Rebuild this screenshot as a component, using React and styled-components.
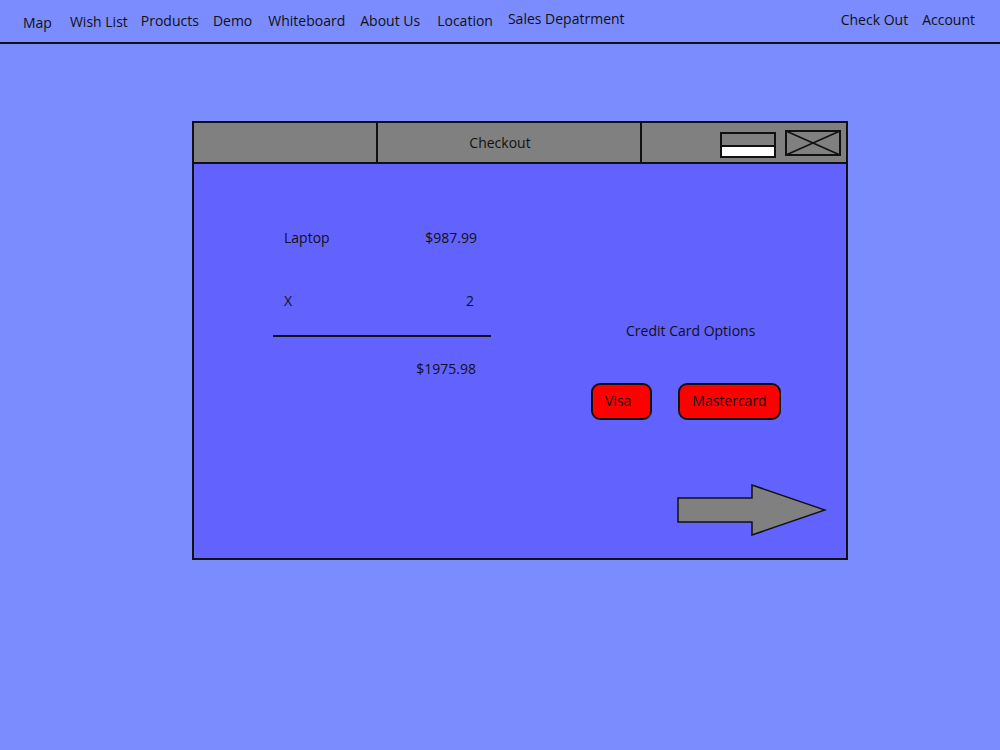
import React from "react";
import styled, { createGlobalStyle } from "styled-components";

const Global = createGlobalStyle`
  html, body { margin: 0; padding: 0; }
  body {
    background: #7b8cff;
    font-family: "Open Sans", "Liberation Sans", sans-serif;
    font-size: 14px;
    color: #111;
    width: 1000px;
    height: 750px;
    overflow: hidden;
  }
`;

const Page = styled.div`
  width: 1000px;
  height: 750px;
  background: #7b8cff;
`;

const Nav = styled.nav`
  height: 42px;
  border-bottom: 2px solid #111;
  display: flex;
  align-items: flex-start;
  padding: 0 25px 0 23px;
  box-sizing: content-box;
`;

const NavGroup = styled.div`
  display: flex;
  margin-left: ${(p) => (p.$right ? "auto" : "0")};
`;

const NavItem = styled.a`
  line-height: 20px;
  margin-top: ${(p) => p.$top}px;
  margin-left: ${(p) => p.$ml || 0}px;
  color: #111;
  text-decoration: none;
  white-space: nowrap;
`;

const Window = styled.section`
  margin: 77px 0 0 192px;
  width: 656px;
  height: 439px;
  box-sizing: border-box;
  border: 2px solid #111;
  background: #6262ff;
  display: flex;
  flex-direction: column;
`;

const TitleBar = styled.div`
  height: 39px;
  flex: none;
  display: grid;
  grid-template-columns: 184px 264px 1fr;
  background: #808080;
  border-bottom: 2px solid #111;
`;

const TitleCell = styled.div`
  display: flex;
  align-items: center;
  justify-content: ${(p) => p.$justify || "center"};
  border-right: ${(p) => (p.$divider ? "2px solid #111" : "none")};
  padding-right: ${(p) => p.$pr || 0}px;
  gap: 9px;
`;

const MinBox = styled.div`
  width: 56px;
  height: 26px;
  box-sizing: border-box;
  border: 2px solid #111;
  display: flex;
  flex-direction: column;
  justify-content: flex-end;
  margin-top: 4px;
  background: #808080;
`;

const MinFill = styled.div`
  height: 9px;
  background: #fff;
  border-top: 2px solid #111;
`;

const CloseBox = styled.svg`
  display: block;
  width: 56px;
  height: 26px;
`;

const Body = styled.div`
  flex: 1;
  display: flex;
  flex-direction: column;
`;

const Content = styled.div`
  display: flex;
  align-items: flex-start;
`;

const Summary = styled.div`
  margin: 64px 0 0 79px;
  width: 218px;
`;

const Row = styled.div`
  display: flex;
  justify-content: space-between;
  line-height: 20px;
  padding: 0 ${(p) => p.$pr}px 0 11px;
  margin-top: ${(p) => p.$mt || 0}px;
`;

const Rule = styled.hr`
  margin: 24px 0 0;
  border: none;
  height: 2px;
  background: #111;
`;

const Options = styled.div`
  margin: 157px 0 0 100px;
`;

const OptionsTitle = styled.div`
  line-height: 20px;
  padding-left: 35px;
`;

const Buttons = styled.div`
  display: flex;
  gap: 26px;
  margin-top: 42px;
`;

const CardButton = styled.button`
  width: ${(p) => p.$w}px;
  height: 37px;
  box-sizing: border-box;
  background: #ff0000;
  border: 2px solid #111;
  border-radius: 9px;
  font: inherit;
  color: #111;
  display: flex;
  align-items: center;
  justify-content: ${(p) => (p.$left ? "flex-start" : "center")};
  padding: 0 0 1px ${(p) => (p.$left ? 12 : 0)}px;
  line-height: 20px;
`;

const Footer = styled.div`
  display: flex;
  justify-content: flex-end;
  padding-right: 19px;
  margin-top: 64px;
`;

const Arrow = styled.svg`
  display: block;
  width: 150px;
  height: 52px;
`;

export default function App() {
  const left = [
    ["Map", 2, 0],
    ["Wish List", 1, 18],
    ["Products", 0, 13],
    ["Demo", 0, 14],
    ["Whiteboard", 0, 16],
    ["About Us", 0, 15],
    ["Location", 0, 17],
    ["Sales Depatrment", -2, 15],
  ];
  return (
    <Page>
      <Global />
      <Nav>
        <NavGroup>
          {left.map(([t, o, ml]) => (
            <NavItem key={t} $top={11 + o} $ml={ml}>
              {t}
            </NavItem>
          ))}
        </NavGroup>
        <NavGroup $right>
          <NavItem $top={10}>Check Out</NavItem>
          <NavItem $top={10} $ml={14}>Account</NavItem>
        </NavGroup>
      </Nav>
      <Window>
        <TitleBar>
          <TitleCell $divider />
          <TitleCell $divider $pr={18}>Checkout</TitleCell>
          <TitleCell $justify="flex-end" $pr={5}>
            <MinBox>
              <MinFill />
            </MinBox>
            <CloseBox viewBox="0 0 56 26">
              <rect x="1" y="1" width="54" height="24" fill="#808080" stroke="#111" strokeWidth="2" />
              <line x1="1" y1="1" x2="55" y2="25" stroke="#111" strokeWidth="1.5" />
              <line x1="55" y1="1" x2="1" y2="25" stroke="#111" strokeWidth="1.5" />
            </CloseBox>
          </TitleCell>
        </TitleBar>
        <Body>
          <Content>
            <Summary>
              <Row $pr={14}>
                <span>Laptop</span>
                <span>$987.99</span>
              </Row>
              <Row $pr={17} $mt={43}>
                <span>X</span>
                <span>2</span>
              </Row>
              <Rule />
              <Row $pr={15} $mt={22}>
                <span />
                <span>$1975.98</span>
              </Row>
            </Summary>
            <Options>
              <OptionsTitle>Credit Card Options</OptionsTitle>
              <Buttons>
                <CardButton $w={61} $left>Visa</CardButton>
                <CardButton $w={103}>Mastercard</CardButton>
              </Buttons>
            </Options>
          </Content>
          <Footer>
            <Arrow viewBox="0 0 150 52">
              <polygon
                points="1,14 75,14 75,1 148,26 75,51 75,38 1,38"
                fill="#808080"
                stroke="#111"
                strokeWidth="1.5"
                strokeLinejoin="miter"
              />
            </Arrow>
          </Footer>
        </Body>
      </Window>
    </Page>
  );
}
